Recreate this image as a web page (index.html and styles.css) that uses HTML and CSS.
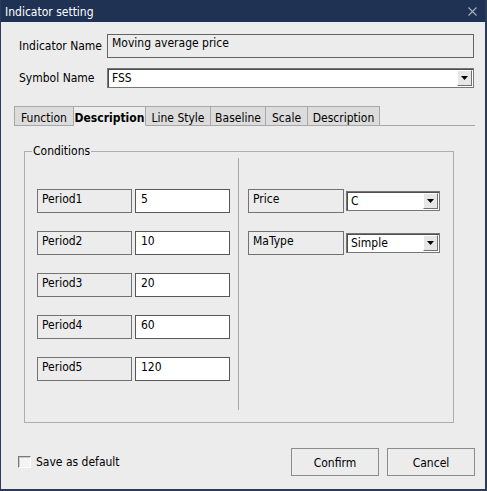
FILE: index.html
```html
<!DOCTYPE html>
<html>
<head>
<meta charset="utf-8">
<link rel="stylesheet" href="styles.css">
</head>
<body>
<div class="window">
  <div class="titlebar">
    <span class="title">Indicator setting</span>
    <svg class="close" width="9" height="9" viewBox="0 0 9 9"><path d="M0.5 0.5 L8.5 8.5 M8.5 0.5 L0.5 8.5" stroke="#a9b1bf" stroke-width="1.1" fill="none"/></svg>
  </div>
  <div class="content">
    <div class="form-row row-name">
      <span class="form-label">Indicator Name</span>
      <div class="textbox">Moving average price</div>
    </div>
    <div class="form-row row-symbol">
      <span class="form-label">Symbol Name</span>
      <div class="combo combo-wide">
        <span class="combo-text">FSS</span>
        <span class="combo-btn"><svg width="7" height="4" viewBox="0 0 7 4"><path d="M0 0 H7 L3.5 4 Z" fill="#000"/></svg></span>
      </div>
    </div>
    <div class="tabs">
      <div class="tab tab-function">Function</div>
      <div class="tab tab-desc active">Description</div>
      <div class="tab tab-line">Line Style</div>
      <div class="tab tab-base">Baseline</div>
      <div class="tab tab-scale">Scale</div>
      <div class="tab tab-desc">Description</div>
    </div>
    <fieldset class="group">
      <legend class="group-title">Conditions</legend>
      <div class="group-inner">
        <div class="col col-left">
          <div class="param-row"><div class="param-label">Period1</div><div class="param-value">5</div></div>
          <div class="param-row"><div class="param-label">Period2</div><div class="param-value">10</div></div>
          <div class="param-row"><div class="param-label">Period3</div><div class="param-value">20</div></div>
          <div class="param-row"><div class="param-label">Period4</div><div class="param-value">60</div></div>
          <div class="param-row"><div class="param-label">Period5</div><div class="param-value">120</div></div>
        </div>
        <div class="divider"></div>
        <div class="col col-right">
          <div class="param-row param-row-right">
            <div class="param-label param-label-wide">Price</div>
            <div class="combo combo-small">
              <span class="combo-text">C</span>
              <span class="combo-btn"><svg width="7" height="4" viewBox="0 0 7 4"><path d="M0 0 H7 L3.5 4 Z" fill="#000"/></svg></span>
            </div>
          </div>
          <div class="param-row param-row-right">
            <div class="param-label param-label-wide">MaType</div>
            <div class="combo combo-small">
              <span class="combo-text">Simple</span>
              <span class="combo-btn"><svg width="7" height="4" viewBox="0 0 7 4"><path d="M0 0 H7 L3.5 4 Z" fill="#000"/></svg></span>
            </div>
          </div>
        </div>
      </div>
    </fieldset>
    <div class="footer">
      <label class="check">
        <span class="check-box"></span>
        <span class="check-text">Save as default</span>
      </label>
      <div class="buttons">
        <div class="btn">Confirm</div>
        <div class="btn">Cancel</div>
      </div>
    </div>
  </div>
</div>
</body>
</html>
```

FILE: styles.css
```css
* {
  box-sizing: border-box;
}

html, body {
  margin: 0;
  padding: 0;
}

body {
  font-family: "DejaVu Sans Condensed", "DejaVu Sans", "Liberation Sans", sans-serif;
  font-size: 12px;
  color: #000;
  background: #ececec;
}

.window {
  width: 487px;
  height: 491px;
  background: #ececec;
  border-left: 1px solid #2a3a57;
  border-right: 2px solid #2a3a57;
  border-bottom: 2px solid #2a3a57;
  display: flex;
  flex-direction: column;
}

.titlebar {
  height: 22px;
  flex: 0 0 22px;
  background: #1f3253;
  color: #fff;
  display: flex;
  align-items: center;
  justify-content: space-between;
  padding: 0 8px 0 4px;
}

.title {
  line-height: 14px;
  margin-top: 1px;
}

.close {
  display: block;
  margin-top: 1px;
}

.content {
  flex: 1;
  display: flex;
  flex-direction: column;
}

.form-row {
  display: flex;
  align-items: center;
  margin-left: 18px;
}

.row-name {
  margin-top: 12px;
  height: 24px;
}

.row-symbol {
  margin-top: 10px;
  height: 20px;
}

.form-label {
  width: 88px;
  line-height: 14px;
  white-space: nowrap;
}

.textbox {
  width: 367px;
  height: 24px;
  border: 1px solid #646464;
  padding: 1px 4px;
  line-height: 14px;
}

.combo {
  display: flex;
  background: #fff;
  border: 1px solid #767676;
  box-shadow: inset 1px 1px 0 #4e4e4e;
  padding: 1px;
}

.combo-wide {
  width: 367px;
  height: 20px;
}

.combo-small {
  width: 94px;
  height: 20px;
}

.combo-text {
  flex: 1;
  padding-left: 3px;
  line-height: 17px;
  white-space: nowrap;
}

.combo-btn {
  width: 15px;
  background: #e6e6e6;
  border: 1px solid;
  border-color: #ffffff #707070 #707070 #ffffff;
  display: flex;
  align-items: center;
  justify-content: center;
}

.combo-btn svg {
  display: block;
}

.tabs {
  display: flex;
  margin: 18px 0 0 13px;
  width: 461px;
  height: 20px;
  border-bottom: 1px solid #a8a8a8;
}

.tab {
  height: 20px;
  margin-bottom: -1px;
  background: #dcdcdc;
  border: 1px solid #a8a8a8;
  text-align: center;
  line-height: 14px;
  padding-top: 4px;
  white-space: nowrap;
}

.tab + .tab {
  border-left: none;
}

.tab.active {
  background: #ececec;
  border-bottom-color: #ececec;
  font-weight: bold;
}

.tab-function { width: 60px; }
.tab-desc { width: 72px; }
.tab-line { width: 65px; }
.tab-base { width: 55px; }
.tab-scale { width: 42px; }

.group {
  margin: 18px 0 0 23px;
  width: 430px;
  border: 1px solid #adadad;
  padding: 0 0 12px 0;
  min-width: 0;
}

.group-title {
  margin-left: 7px;
  padding: 0 1px;
  line-height: 14px;
}

.group-inner {
  display: flex;
  height: 252px;
}

.col {
  display: flex;
  flex-direction: column;
  gap: 18px;
  padding-top: 31px;
}

.col-left {
  padding-left: 12px;
}

.divider {
  width: 1px;
  background: #a8a8a8;
  margin-left: 8px;
}

.col-right {
  margin-left: 9px;
}

.param-row {
  display: flex;
  gap: 3px;
  height: 24px;
}

.param-row-right {
  gap: 2px;
  align-items: center;
}

.param-label {
  width: 95px;
  height: 24px;
  border: 1px solid #737373;
  padding: 2px 4px;
  line-height: 14px;
}

.param-label-wide {
  width: 96px;
}

.param-value {
  width: 95px;
  height: 24px;
  border: 1px solid #585858;
  background: #fff;
  padding: 2px 5px;
  line-height: 14px;
}

.footer {
  margin-top: 25px;
  display: flex;
  align-items: center;
  justify-content: space-between;
  padding: 0 10px 0 17px;
}

.check {
  display: flex;
  align-items: center;
  gap: 5px;
  margin-top: -1px;
}

.check-box {
  width: 13px;
  height: 12px;
  background: #f4f4f4;
  border: 1px solid;
  border-color: #7a7a7a #ffffff #ffffff #7a7a7a;
  box-shadow: inset 1px 1px 0 #c8c8c8;
}

.check-text {
  line-height: 14px;
}

.buttons {
  display: flex;
  gap: 8px;
}

.btn {
  width: 88px;
  height: 28px;
  border: 1px solid #8c8c8c;
  background: #ececec;
  display: flex;
  align-items: center;
  justify-content: center;
  padding-top: 2px;
}
```
